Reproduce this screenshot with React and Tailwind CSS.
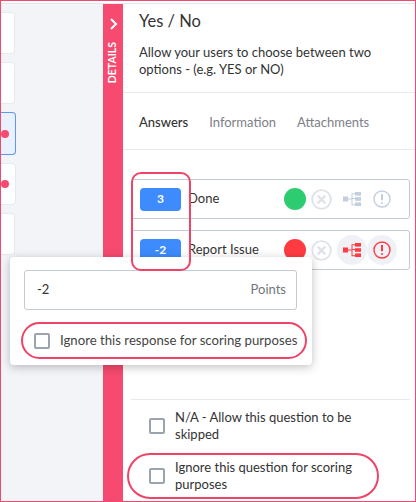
import React from "react";

const font = { fontFamily: "Lato, 'Open Sans', sans-serif" };

const CrossIcon = () => (
  <svg width="21" height="21" viewBox="0 0 22 22" fill="none" stroke="#dfe3e9" strokeWidth="2">
    <circle cx="11" cy="11" r="9.8" />
    <path d="M7 7l8 8M15 7l-8 8" strokeWidth="2.4" />
  </svg>
);

const TreeIcon = ({ color }) => (
  <svg width="18" height="14" viewBox="0 0 18 14" fill={color}>
    <rect x="0" y="4.5" width="5" height="5" />
    <rect x="12" y="0" width="6" height="3.6" />
    <rect x="12" y="5.2" width="6" height="3.6" />
    <rect x="12" y="10.4" width="6" height="3.6" />
    <path d="M5 6.5h3.5V1.3H12v1H9.5v3.7H12v1H9.5v5.2H12v1H8.5V7.5H5z" />
  </svg>
);

const AlertIcon = ({ color }) => (
  <svg width="18" height="18" viewBox="0 0 18 18" fill="none" stroke={color} strokeWidth="1.4">
    <circle cx="9" cy="9" r="8" />
    <path d="M9 4v6.2" strokeWidth="2" />
    <circle cx="9" cy="13" r="1" fill={color} stroke="none" />
  </svg>
);

const Checkbox = () => (
  <div className="w-4 h-4 shrink-0 rounded-[2px] border-2 border-[#9aa3b0] bg-white" />
);

const AnswerRow = ({ points, label, dot, active }) => (
  <div className="h-10 flex items-center pl-2 pr-[12px] border border-[#c3cad3] rounded-[3px] bg-white">
    <div className="w-[41px] h-[23px] rounded bg-[#3d8bfd] flex items-center justify-center text-white text-[12px] font-bold">
      {points}
    </div>
    <p className="ml-[7px] text-[13px] text-[#333] flex-1">{label}</p>
    <div className="w-[22px] h-[22px] rounded-full" style={{ background: dot }} />
    <div className="ml-[5px]">
      <CrossIcon />
    </div>
    <div className={`ml-[5px] w-[30px] h-[30px] rounded-full flex items-center justify-center ${active ? "bg-[#f0f1f6]" : ""}`}>
      <TreeIcon color={active ? "#ff3b42" : "#c3cede"} />
    </div>
    <div className={`w-[30px] h-[30px] rounded-full flex items-center justify-center ${active ? "bg-[#f0f1f6]" : ""}`}>
      <AlertIcon color={active ? "#ff3b42" : "#c3cede"} />
    </div>
  </div>
);

const App = () => {
  return (
    <div
      className="relative w-[416px] h-[502px] overflow-hidden bg-white border border-[#f04a70] flex flex-col"
      style={font}
    >
      <div className="h-[3px] shrink-0 bg-white border-b border-[#e7e8ec]" />
      <div className="flex flex-1 min-h-0">
        {/* Left list */}
        <div className="w-[102px] bg-[#f3f4f8] pt-2 flex flex-col gap-2">
          <div className="w-[14px] h-[42px] bg-white border border-l-0 border-[#e8e9ee] rounded-r" />
          <div className="w-[14px] h-[42px] bg-white border border-l-0 border-[#e8e9ee] rounded-r" />
          <div className="w-[15px] h-[43px] bg-[#e9f1ff] border border-l-0 border-[#5d97f2] rounded-r flex items-center">
            <div className="w-2 h-2 rounded-full bg-[#f64a70]" />
          </div>
          <div className="w-[15px] h-[42px] bg-white border border-l-0 border-[#e8e9ee] rounded-r flex items-center">
            <div className="w-2 h-2 rounded-full bg-[#f64a70]" />
          </div>
          <div className="w-[14px] h-[42px] bg-white border border-l-0 border-[#e8e9ee] rounded-r" />
        </div>

        {/* Details strip */}
        <div className="w-5 bg-[#f64a70] flex flex-col items-center pt-[14px]">
          <svg width="9" height="12" viewBox="0 0 9 12" fill="none" stroke="#fff" strokeWidth="2">
            <path d="M2 1l5 5-5 5" />
          </svg>
          <span className="mt-[12px] text-white text-[10.5px] font-bold [writing-mode:vertical-rl] rotate-180">
            DETAILS
          </span>
        </div>

        {/* Panel */}
        <div className="flex-1 min-w-0 bg-white flex flex-col">
          <div className="h-[89px] shrink-0 pl-[16px] pr-8 pt-[7px] border-b border-[#e9eaee]">
            <h1 className="text-[16.5px] leading-[20px] text-[#333]">Yes / No</h1>
            <p className="mt-[13px] text-[13px] leading-[17px] text-[#333]">
              Allow your users to choose between two options - (e.g. YES or NO)
            </p>
          </div>
          <div className="h-[57px] shrink-0 pl-[16px] pt-1 flex items-center gap-[21px] text-[13px] border-b border-[#e9eaee]">
            <span className="text-[#333] font-medium">Answers</span>
            <span className="text-[#7d8087]">Information</span>
            <span className="text-[#7d8087]">Attachments</span>
          </div>
          <div className="pl-2 pr-[5px] pt-[29px] flex flex-col gap-[11px]">
            <AnswerRow points="3" label="Done" dot="#2ecc71" />
            <AnswerRow points="-2" label="Report Issue" dot="#ff3b42" active />
          </div>
          <div className="mt-[129px] ml-2 mr-[5px] border-t border-[#e9eaee] pt-[9px] pl-[18px] flex flex-col gap-[16px] text-[13px] leading-[17px] text-[#333]">
            <div className="flex items-center gap-[10px]">
              <Checkbox />
              <p className="w-[205px]">N/A - Allow this question to be skipped</p>
            </div>
            <div className="flex items-center gap-[10px]">
              <Checkbox />
              <p className="w-[205px]">Ignore this question for scoring purposes</p>
            </div>
          </div>
        </div>
      </div>

      {/* Popover */}
      <div className="absolute left-[9px] top-[256px] w-[302px] h-[108px] bg-white rounded shadow-[0_2px_10px_rgba(0,0,0,0.25)] px-[14px] pt-[13px]">
        <div className="h-10 w-[273px] border border-[#c3cad3] rounded-[3px] flex items-center justify-between pl-3 pr-[10px] text-[13px]">
          <span className="text-[#333]">-2</span>
          <span className="text-[#70757c]">Points</span>
        </div>
        <div className="mt-[21px] ml-[10px] flex items-center gap-[10px] text-[13.2px] text-[#444]">
          <Checkbox />
          <span className="whitespace-nowrap">Ignore this response for scoring purposes</span>
        </div>
      </div>

      {/* Annotations */}
      <div className="absolute left-[130px] top-[171px] w-[60px] h-[99px] border-2 border-[#ee4468] rounded-[10px]" />
      <div className="absolute left-[20px] top-[321px] w-[286px] h-[37px] border-2 border-[#ee4468] rounded-full" />
      <div className="absolute left-[126px] top-[452px] w-[252px] h-[46px] border-2 border-[#ee4468] rounded-full" />
    </div>
  );
};

export default App;
